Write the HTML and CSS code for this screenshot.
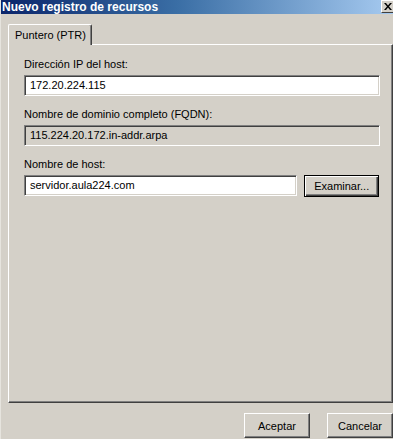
FILE: index.html
```html
<!DOCTYPE html>
<html lang="es">
<head>
<meta charset="utf-8">
<title>Nuevo registro de recursos</title>
<link rel="stylesheet" href="styles.css">
</head>
<body>
<div class="window">
  <div class="titlebar">
    <span class="title">Nuevo registro de recursos</span>
    <span class="close">
      <svg width="8" height="7" viewBox="0 0 8 7"><path d="M0 0h2l2 2.5L6 0h2L5 3.5 8 7H6L4 4.5 2 7H0l3-3.5z" fill="#000"/></svg>
    </span>
  </div>
  <div class="body">
    <div class="tabs">
      <div class="tab">Puntero (PTR)</div>
    </div>
    <div class="panel">
      <div class="field">
        <div class="label">Dirección IP del host:</div>
        <div class="input full">172.20.224.115</div>
      </div>
      <div class="field">
        <div class="label">Nombre de dominio completo (FQDN):</div>
        <div class="input full disabled">115.224.20.172.in-addr.arpa</div>
      </div>
      <div class="field">
        <div class="label">Nombre de host:</div>
        <div class="row">
          <div class="input host">servidor.aula224.com</div>
          <div class="btn default">Examinar...</div>
        </div>
      </div>
    </div>
    <div class="actions">
      <div class="btn action">Aceptar</div>
      <div class="btn action">Cancelar</div>
    </div>
  </div>
</div>
</body>
</html>
```
FILE: styles.css
```css
html, body {
  margin: 0;
  padding: 0;
  background: #d4d0c8;
}
body {
  font-family: "Liberation Sans", Arial, sans-serif;
  font-size: 11px;
  color: #000;
}
.window {
  width: 393px;
  height: 439px;
  overflow: hidden;
  background: #d4d0c8;
  box-sizing: border-box;
  border-left: 1px solid #e6e4de;
}
.titlebar {
  height: 14px;
  display: flex;
  align-items: center;
  justify-content: space-between;
  background: linear-gradient(to right, #0a246a 0%, #3a6ea5 45%, #a6caf0 100%);
  margin-left: -1px;
}
.title {
  color: #fff;
  font-weight: bold;
  font-size: 12px;
  line-height: 14px;
  padding-left: 2px;
}
.close {
  width: 12px;
  height: 13px;
  box-sizing: border-box;
  background: #d4d0c8;
  border-top: 1px solid #fff;
  border-left: 1px solid #fff;
  border-bottom: 1px solid #404040;
  display: flex;
  align-items: center;
  justify-content: center;
  align-self: flex-start;
}
.body {
  padding: 10px 0 0 7px;
}
.tabs {
  display: flex;
  position: relative;
  z-index: 1;
  margin-bottom: -1px;
}
.tab {
  height: 21px;
  width: 84px;
  box-sizing: border-box;
  background: #d4d0c8;
  border-top: 1px solid #fff;
  border-left: 1px solid #fff;
  border-right: 1px solid #404040;
  box-shadow: inset -1px 0 #808080;
  border-radius: 2px 2px 0 0;
  padding: 4px 0 0 6px;
  line-height: 13px;
  white-space: nowrap;
}
.panel {
  height: 359px;
  box-sizing: border-box;
  border-top: 1px solid #fff;
  border-left: 1px solid #fff;
  border-right: 1px solid #404040;
  border-bottom: 1px solid #404040;
  box-shadow: inset -1px -1px #808080;
  padding: 13px 13px 0 15px;
  display: flex;
  flex-direction: column;
  gap: 12px;
}
.label {
  line-height: 13px;
  margin-bottom: 4px;
  white-space: nowrap;
}
.input {
  height: 21px;
  box-sizing: border-box;
  background: #fff;
  border: 1px solid;
  border-color: #808080 #fff #fff #808080;
  box-shadow: inset 1px 1px #404040, inset -1px -1px #d4d0c8;
  padding: 0 0 0 5px;
  line-height: 19px;
  white-space: nowrap;
}
.input.full {
  width: 356px;
}
.input.disabled {
  background: #d4d0c8;
}
.row {
  display: flex;
  align-items: flex-start;
  gap: 7px;
}
.input.host {
  width: 275px;
}
.btn {
  box-sizing: border-box;
  background: #d4d0c8;
  border: 1px solid;
  border-color: #fff #404040 #404040 #fff;
  box-shadow: inset -1px -1px #808080;
  display: flex;
  align-items: center;
  justify-content: center;
  white-space: nowrap;
}
.btn.default {
  width: 75px;
  height: 22px;
  border: 1px solid #000;
  box-shadow: inset 1px 1px #fff, inset -1px -1px #404040, inset -2px -2px #808080;
  padding-bottom: 1px;
}
.actions {
  display: flex;
  justify-content: flex-end;
  gap: 17px;
  margin-top: 10px;
}
.btn.action {
  width: 66px;
  height: 25px;
}
```
